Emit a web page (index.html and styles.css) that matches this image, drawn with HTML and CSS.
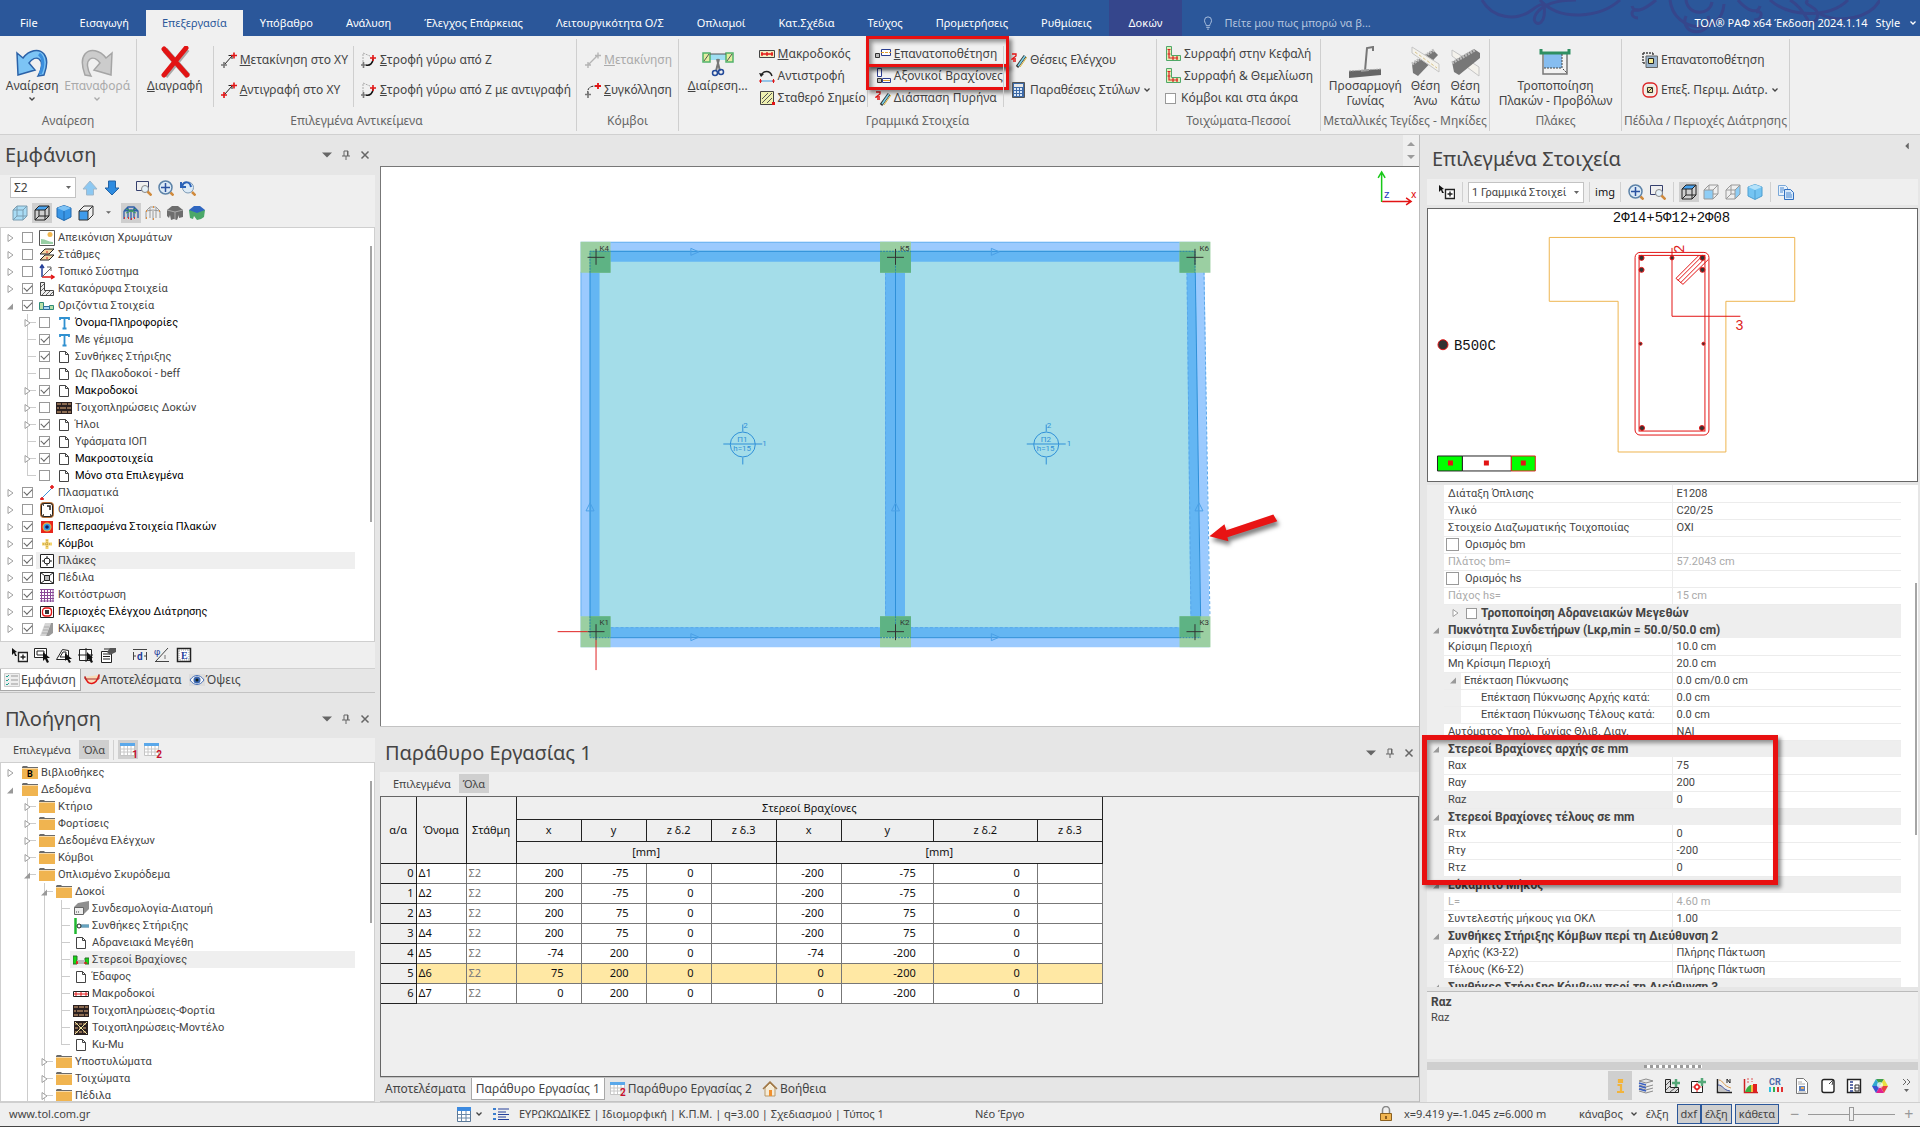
FILE: index.html
```
<!DOCTYPE html>
<html lang="el">
<head>
  <meta charset="UTF-8" />
  <meta name="viewport" content="width=device-width, initial-scale=1.0" />
  <title>ΤΟΛ ΡΑΦ</title>
  <link rel="stylesheet" href="styles.css">
</head>
<body>

  <!-- ICON SPRITE -->
  <svg class="sprite" aria-hidden="true">
    <symbol id="closed" viewBox="0 0 14 14"><path d="M5 3.5v7l5-3.5z" fill="#fff" stroke="#a0a0a0"/></symbol>
    <symbol id="open" viewBox="0 0 14 14"><path d="M10 4.5v6H4z" fill="#999"/></symbol>
    <symbol id="chev" viewBox="0 0 8 8"><path d="M1.5 2.5L4 5l2.500-2.500" fill="none" stroke="currentColor" stroke-width="1.300"/></symbol>
    <symbol id="tri" viewBox="0 0 8 8"><path d="M0 2h8L4 6z" fill="#666"/></symbol>
    <symbol id="pin" viewBox="0 0 10 10"><path d="M3 1h4v5M3 1v5M1 6h8M5 6v4M6.500 1v5" fill="none" stroke="#666"/></symbol>
    <symbol id="close" viewBox="0 0 10 10"><path d="M1.500 1.500l7 7m0-7l-7 7" fill="none" stroke="#666" stroke-width="1.500"/></symbol>
    <symbol id="doc" viewBox="0 0 16 16"><path d="M3.500 2.500h6l3 3v8h-9zM9.500 2.500v3h3" fill="#fff" stroke="#444"/></symbol>
    <symbol id="folder" viewBox="0 0 16 16"><path d="M0 2l1-1h4l1 1h10v1H0z" fill="#6b6b6b"/><path d="M0 3.500h16V14H0z" fill="#f0b450"/></symbol>
    <symbol id="folder-b" viewBox="0 0 16 16"><path d="M0 2l1-1h4l1 1h10v1H0z" fill="#6b6b6b"/><path d="M0 3.500h16V14H0z" fill="#f0b450"/><text x="5" y="12" font-size="9" font-weight="bold" font-family="Roboto">B</text></symbol>
    <symbol id="undo" viewBox="0 0 32 32"><path d="M1 7l6 5C13 4 23 2 28 8c4 5 3 13 0 21l-6 1c4-7 5-14 1-17-3-2-7 0-10 4l6 7-17 5z" fill="#7cc4f5" stroke="#2b62a8" stroke-width="1.500"/><path d="M23 8c5 4 5 12 1 20" fill="none" stroke="#3a8ede" stroke-width="3"/></symbol>
    <symbol id="redo" viewBox="0 0 32 32"><path d="M31 7l-6 5C19 4 9 2 4 8c-4 5-3 13 0 21l6 1C6 23 5 16 9 13c3-2 7 0 10 4l-6 7 17 5z" fill="#ccc" stroke="#a5a5a5" stroke-width="1.500"/></symbol>
    <symbol id="delete" viewBox="0 0 32 32"><path d="M5 3l23 26M27 2L5 29" stroke="#a9a9a9" stroke-width="6" transform="translate(1 1)"/><path d="M5 3l23 26M27 2L5 29" stroke="#e21414" stroke-width="5" stroke-linecap="round"/></symbol>
    <symbol id="move" viewBox="0 0 16 16"><path d="M3.500 12.500L11 4" stroke="#222"/><path d="M11 7V3.500H7.500" fill="none" stroke="#222"/><path d="M10 3.500h6M13 .5v6" stroke="#e21414" stroke-width="1.600"/><path d="M0 13h6M3 10v6" stroke="#777" stroke-width="1.600"/></symbol>
    <symbol id="copy-xy" viewBox="0 0 16 16"><path d="M3.500 12.500L11 4" stroke="#222"/><path d="M11 7V3.500H7.500" fill="none" stroke="#222"/><path d="M10 3.500h6M13 .5v6M0 13h6M3 10v6" stroke="#e21414" stroke-width="1.600"/></symbol>
    <symbol id="move-off" viewBox="0 0 16 16"><path d="M3 13L13 3M0 13h6M3 10v6M10 3.500h6M13 .5v6" stroke="#b5b5b5" stroke-width="1.400"/></symbol>
    <symbol id="rotate" viewBox="0 0 16 16"><path d="M2 13V1l7 3" fill="none" stroke="#aaa" stroke-dasharray="2 1"/><path d="M5 13c4 1 7-2 7-6" fill="none" stroke="#111" stroke-width="1.500"/><path d="M9 6h6M12 3v6" stroke="#e21414" stroke-width="1.600"/><path d="M0 13h5M2.500 10v6" stroke="#777" stroke-width="1.600"/></symbol>
    <symbol id="glue" viewBox="0 0 16 16"><path d="M3 12C2 6 5 4 11 4" fill="none" stroke="#222" stroke-dasharray="3 1"/><path d="M10 4h6M13 1v6" stroke="#e21414" stroke-width="1.800"/><path d="M0 12.500h6M3 10v6" stroke="#777" stroke-width="1.600"/></symbol>
    <symbol id="split" viewBox="0 0 32 32"><path d="M8 8h16v6H8z" fill="#9fdff2"/><path d="M1 7h7v9H1zM24 7h7v9h-7z" fill="#e2eea0" stroke="#52b26a" stroke-width="1.500"/><path d="M8 8h16M2 15l5-7M25 15l5-7" stroke="#555"/><path d="M15 13l3 12M17 13l-3 12" stroke="#777" stroke-width="2"/><circle cx="13" cy="27" r="2.500" fill="none" stroke="#234a9a" stroke-width="1.500"/><circle cx="19" cy="26" r="2.500" fill="none" stroke="#234a9a" stroke-width="1.500"/></symbol>
    <symbol id="macro" viewBox="0 0 16 16"><path d="M.5 4.500h15v7H.5z" fill="#f0edc0" stroke="#444"/><path d="M2 8h12M3 6v4M8 6v4M13 6v4" stroke="#e21414" stroke-width="1.300"/></symbol>
    <symbol id="reverse" viewBox="0 0 16 16"><path d="M2 8c2-6 9-6 11 0" fill="none" stroke="#222" stroke-width="1.500"/><path d="M0 5l2 4 3-3z" fill="#222"/><path d="M2 13h12" stroke="#3b9ae0"/><path d="M0 13h3M13 13h3M1.500 11v4M14.500 11v4" stroke="#e21414"/></symbol>
    <symbol id="fixed" viewBox="0 0 16 16"><path d="M1.500 1.500h13v13h-13z" fill="#eef0b0" stroke="#444"/><path d="M3 9l6-6M3 13L13 3M8 13l5-5" stroke="#555"/><path d="M13 12h3v3h-3z" fill="#e21414"/></symbol>
    <symbol id="repos" viewBox="0 0 16 16"><path d="M.5 7.500h4v4h-4z" fill="#bbb" stroke="#333"/><path d="M6.500 3.500h9v6h-9z" fill="#fff" stroke="#2a3d90"/><path d="M6 6.500h10" stroke="#e0a030" stroke-dasharray="3 1"/></symbol>
    <symbol id="axial" viewBox="0 0 16 16"><path d="M2.500.5h4v8h-4zM7.500 10.500h8v4h-8z" fill="#fff" stroke="#2a3d90"/><path d="M2.500 10.500h4v4h-4z" fill="#bbb" stroke="#333"/><path d="M8 12.500h7" stroke="#e0a030"/></symbol>
    <symbol id="core" viewBox="0 0 16 16"><path d="M6 15l8-11" stroke="#333" stroke-width="3"/><path d="M7 14l7-10" stroke="#7bd4ea" stroke-width="1.500"/><path d="M9 15l7-10" stroke="#d9b840"/><path d="M1 2h4v2L1 7h4M2 9l3 0" fill="none" stroke="#e21414" stroke-width="1.300"/></symbol>
    <symbol id="calc" viewBox="0 0 16 16"><path d="M1.500.5h12v15h-12z" fill="#3d6aa8" stroke="#555"/><path d="M3 2h9v3H3z" fill="#e8e8e8"/><path d="M4 6v9M7 6v9M10 6v9" stroke="#dbe8f7" stroke-width="2" stroke-dasharray="2 1"/></symbol>
    <symbol id="wall" viewBox="0 0 16 16"><path d="M1.500.5h5v9h9v5h-14z" fill="#dff0b8" stroke="#4fa868"/><path d="M4 3v9h9M2.500 3.500h3M2.500 8h3M8 10v4M12 10v4" fill="none" stroke="#d22" stroke-width="1.200"/></symbol>
    <symbol id="purlin" viewBox="0 0 32 32"><path d="M0 25l32-2v6L0 32z" fill="#666"/><path d="M16 25L18 2l6-1v4" fill="none" stroke="#777" stroke-width="2"/><path d="M12 25l8-1" stroke="#999" stroke-width="2"/><path d="M0 25l32-2" stroke="#aaa" stroke-dasharray="2 1"/></symbol>
    <symbol id="up" viewBox="0 0 32 32"><path d="M3 18L24 4l5 5-20 21-5-3z" fill="#777"/><path d="M3 18L25 4" stroke="#bbb" stroke-width="3" stroke-dasharray="2 1"/><path d="M3 1l27 17v8L3 7z" fill="#f4f2ec" stroke="#c5c5c5"/><path d="M6 6l22 16" stroke="#d8c48a" stroke-dasharray="3 2"/></symbol>
    <symbol id="down" viewBox="0 0 32 32"><path d="M3 4l27 17v9L3 10z" fill="#f4f2ec" stroke="#c5c5c5"/><path d="M3 16L25 3l6 4v5L10 29l-5-3z" fill="#777"/><path d="M3 17L26 4" stroke="#bbb" stroke-width="3" stroke-dasharray="2 1"/></symbol>
    <symbol id="slab-edit" viewBox="0 0 32 32"><path d="M4 7h24v21H4z" fill="#f2f2f2" stroke="#777" stroke-width="1.500"/><path d="M5 8h18v14H5z" fill="#86bdf0"/><path d="M2 3v4h28V3" fill="none" stroke="#2f8f62" stroke-width="3"/><path d="M23 8v14H5M24 23l4 4" fill="none" stroke="#444" stroke-dasharray="2 1"/></symbol>
    <symbol id="foot" viewBox="0 0 16 16"><path d="M1 1h10M1 1v10M11 1v3M1 11h3" stroke="#444" stroke-width="1.500" stroke-dasharray="2 1"/><path d="M4 4h11.500v11.500H4z" fill="#9bb6cf" stroke="#666"/><path d="M6.500 6.500h5v5h-5z" fill="#f4ea90" stroke="#222"/></symbol>
    <symbol id="punch" viewBox="0 0 16 16"><rect x="1" y="1" width="14" height="14" rx="5" fill="#f0f0f0" stroke="#d22" stroke-width="1.300"/><rect x="3.500" y="3.500" width="9" height="9" rx="3" fill="#f5e9d0"/><path d="M5.500 5.500h5v5h-5z" fill="#e8e29a" stroke="#333"/><path d="M6 10l4-4" stroke="#333"/></symbol>
    <symbol id="bulb" viewBox="0 0 12 16"><path d="M4 11c0-2-2-3-2-6a4 4 0 018 0c0 3-2 4-2 6zM4 13h4M5 15h2" fill="none" stroke="#b9cbe6"/></symbol>
    <symbol id="arrow-up" viewBox="0 0 16 16"><path d="M8 1l7 8h-3.500v6h-7V9H1z" fill="#8cc8f2" stroke="#9fb8cc"/></symbol>
    <symbol id="arrow-down" viewBox="0 0 16 16"><path d="M8 15l7-7h-3.500V1h-7v7H1z" fill="#2d8be0" stroke="#2463a5"/></symbol>
    <symbol id="zoom-win" viewBox="0 0 16 16"><path d="M.5 1.500h12v9H.5z" fill="none" stroke="#35406e"/><circle cx="9" cy="9" r="3.500" fill="#e4f0f8" stroke="#888"/><path d="M11.500 11.500l4 4" stroke="#d08a3c" stroke-width="2.500"/></symbol>
    <symbol id="zoom-all" viewBox="0 0 16 16"><circle cx="7.500" cy="7.500" r="6.500" fill="#dceaf6" stroke="#5d83a8" stroke-width="1.500"/><path d="M7.500 3v9M3 7.500h9" stroke="#2a52a0" stroke-width="1.500"/><path d="M12.500 12.500l3 3" stroke="#d08a3c" stroke-width="2.500"/></symbol>
    <symbol id="zoom-prev" viewBox="0 0 16 16"><circle cx="8" cy="7.500" r="5.500" fill="#dceaf6" stroke="#7d9ab5"/><path d="M1 2v5h5M2 6c2-5 8-5 9 1" fill="none" stroke="#2a62b8" stroke-width="2"/><path d="M12 12l3.500 3.500" stroke="#d08a3c" stroke-width="2.500"/></symbol>
    <symbol id="cube-glass" viewBox="0 0 16 16"><path d="M1 5l4-4h10v10l-4 4H1z" fill="#a9dcf5" stroke="#7a9cb0"/><path d="M1 5h10v10M11 5l4-4M5 1v10h10M5 11l-4 4" fill="none" stroke="#7a9cb0"/></symbol>
    <symbol id="cube-top" viewBox="0 0 16 16"><path d="M1 5l4-4h10l-4 4z" fill="#4aa3ee"/><path d="M1 5l4-4h10v10l-4 4H1zM1 5h10v10M11 5l4-4M5 5v6h10M5 11l-4 4" fill="none" stroke="#222"/></symbol>
    <symbol id="cube-solid" viewBox="0 0 16 16"><path d="M8 .5L15 3v9l-7 3.500L1 12V3z" fill="#3996e6" stroke="#2268ad"/><path d="M8 .5L15 3 8 6 1 3z" fill="#7fc3f5"/><path d="M8 6v9" stroke="#2268ad"/></symbol>
    <symbol id="cube-light" viewBox="0 0 16 16"><path d="M8 .5L15 3v9l-7 3.500L1 12V3z" fill="#74c4f2" stroke="#4f9fd0"/><path d="M8 .5L15 3 8 6 1 3z" fill="#b4e2fa"/><path d="M8 6v9" stroke="#4f9fd0"/></symbol>
    <symbol id="cube-front" viewBox="0 0 16 16"><path d="M1 6h9v9H1z" fill="#3f9beb"/><path d="M1 6l5-5h9v9l-5 5H1zM1 6h9v9M10 6l5-5" fill="none" stroke="#333"/></symbol>
    <symbol id="cube-front-l" viewBox="0 0 16 16"><path d="M1 6h9v9H1z" fill="#8ecdf5"/><path d="M1 6l5-5h9v9l-5 5H1zM1 6h9v9M10 6l5-5M6 1v5M10 10h5" fill="none" stroke="#999"/></symbol>
    <symbol id="cube-right" viewBox="0 0 16 16"><path d="M10 6l5-5v9l-5 5z" fill="#8ecdf5"/><path d="M1 6l5-5h9v9l-5 5H1zM1 6h9v9M10 6l5-5M6 1v9h4M6 10l-5 5" fill="none" stroke="#999"/></symbol>
    <symbol id="frame" viewBox="0 0 16 16"><path d="M1 6l4-4h6l4 4v7M1 6v8M5 3v10M11 3v10M8 6v9M1 6l7-1 7 1" fill="none" stroke="#2e5fa8" stroke-width="1.300"/><path d="M3 4l10 4M13 4L3 8" stroke="#3a9a5a"/><path d="M1 13h1M5 13h1M8 14h1M11 13h1" stroke="#d33" stroke-width="2"/></symbol>
    <symbol id="frame-w" viewBox="0 0 16 16"><path d="M1 6l4-4h6l4 4v7M1 6v8M5 3v10M11 3v10M8 6v9M1 6l7-1 7 1" fill="none" stroke="#999"/><path d="M1 6h1M8 2h1M14 6h1M1 13h1M8 14h1" stroke="#e09040" stroke-width="2"/></symbol>
    <symbol id="frame-g" viewBox="0 0 16 16"><path d="M0 5l5-4h6l5 4v7l-4 1v-3l-2 5-3-1-3 1-1-5-1 3-2-2z" fill="#6d6d6d"/><path d="M0 5l8 2 8-2M8 7v7" stroke="#aaa" fill="none"/></symbol>
    <symbol id="frame-c" viewBox="0 0 16 16"><path d="M0 5l1 8 3 1 1-3 3 4 4-1 3-2 1-7z" fill="#4ba869"/><path d="M0 5l5-4h6l5 4-8 3z" fill="#2f66c0"/></symbol>
    <symbol id="i-pic" viewBox="0 0 16 16"><path d="M.5.5h15v15H.5z" fill="#fff" stroke="#555"/><circle cx="11" cy="4.500" r="2.500" fill="#f2b74e"/><path d="M2 14V9c5 0 7 3 12 3v2z" fill="#98cfa5"/></symbol>
    <symbol id="i-levels" viewBox="0 0 16 16"><path d="M1 7l5-5h9l-5 5zM1 13l5-5h9l-5 5z" fill="#f5d9a5" stroke="#222"/><path d="M7 5h2M7 11h2" stroke="#d22"/></symbol>
    <symbol id="i-axes" viewBox="0 0 16 16"><path d="M3 13V2M1 4l2-3 2 3" fill="none" stroke="#26409a" stroke-width="1.500"/><path d="M3 13h11M12 11l3 2-3 2" fill="none" stroke="#e21414" stroke-width="1.500"/><path d="M3 13l9-9M8 3h4v4" fill="none" stroke="#666"/></symbol>
    <symbol id="i-vert" viewBox="0 0 16 16"><path d="M1.500 1.500h4v8h9v5h-13z" fill="#eee" stroke="#444"/><path d="M2 6l3-3M2 10l3-3M3 14l4-4M7 14l4-4M11 14l3-3" stroke="#666"/></symbol>
    <symbol id="i-hor" viewBox="0 0 16 16"><path d="M.5 4.500h4v7h-4zM10.500 7.500h4v4h-4z" fill="#b9e0a8" stroke="#2f8a78"/><path d="M4.500 8.500h6v3h-6z" fill="#a8d8f5" stroke="#2f6f9a"/></symbol>
    <symbol id="i-t" viewBox="0 0 16 16"><path d="M4 5V3h9v2M8.500 3v10.500M6.500 13.500h4" fill="none" stroke="#2f90d0" stroke-width="1.800"/></symbol>
    <symbol id="i-brick" viewBox="0 0 16 16"><path d="M0 2h16v12H0z" fill="#2a2020"/><path d="M1 4h4M6 4h5M12 4h3M1 8h2M4 8h6M11 8h4M1 12h4M6 12h5M12 12h3" stroke="#8a6a50" stroke-width="2"/></symbol>
    <symbol id="i-model" viewBox="0 0 16 16"><path d="M1 1h14v14H1z" fill="#2a2020"/><path d="M2 4h12M2 8h12M2 12h12" stroke="#8a6a50" stroke-width="2" stroke-dasharray="3 1"/><path d="M2 2l12 12M14 2L2 14" stroke="#f0e6a0"/></symbol>
    <symbol id="i-line" viewBox="0 0 16 16"><path d="M3 13L13 3" stroke="#3b8fd8"/><path d="M1 14h4M3 12v3M11 2h4M13 0v4" stroke="#e21414" stroke-width="1.500"/></symbol>
    <symbol id="i-rebar" viewBox="0 0 16 16"><rect x="2" y="1" width="12" height="14" rx="3" fill="#fff" stroke="#b8743c" stroke-width="2"/><rect x="2.500" y="1.500" width="11" height="13" rx="2" fill="none" stroke="#222"/><path d="M8 4h3v4M4 3h1M4 13h1M11 13h1" fill="none" stroke="#222" stroke-width="1.500"/></symbol>
    <symbol id="i-fem" viewBox="0 0 16 16"><path d="M2 2h12v12H2z" fill="#e8261c"/><circle cx="8" cy="8" r="4.500" fill="#f0b840"/><circle cx="8" cy="8" r="3.500" fill="#3a9ae0"/><circle cx="8" cy="8" r="1.800" fill="#111c60"/></symbol>
    <symbol id="i-node" viewBox="0 0 16 16"><path d="M8 3v10M3 8h10" stroke="#f3d470" stroke-width="3"/><path d="M8 4v8M4 8h8" stroke="#b8923c" stroke-dasharray="1 1"/></symbol>
    <symbol id="i-slab" viewBox="0 0 16 16"><path d="M1.500 1.500h13v13h-13z" fill="#fff" stroke="#222"/><circle cx="8" cy="8" r="3" fill="none" stroke="#222"/><path d="M8 3v3M8 10v3M3 8h3M10 8h3" stroke="#222"/></symbol>
    <symbol id="i-foot" viewBox="0 0 16 16"><path d="M1.500 2.500h13v11h-13zM5.500 5.500h5v5h-5zM1.500 2.500l4 3M14.500 2.500l-4 3M1.500 13.500l4-3M14.500 13.500l-4-3" fill="#fff" stroke="#222"/><path d="M6 6h4v4H6z" fill="#bbb"/></symbol>
    <symbol id="i-mesh" viewBox="0 0 16 16"><path d="M2.500 2v13M5.500 2v13M8.500 2v13M11.500 2v13M14 2v13M1 2.500h14M1 5.500h14M1 8.500h14M1 11.500h14M1 14h14" stroke="#8a4a98"/></symbol>
    <symbol id="i-punch" viewBox="0 0 16 16"><path d="M1.500 2.500h13v11h-13z" fill="#fff" stroke="#222"/><rect x="3.500" y="4" width="9" height="8" rx="3" fill="none" stroke="#e21414" stroke-width="1.300"/><path d="M6 6h4v4H6z" fill="#333"/></symbol>
    <symbol id="i-stair" viewBox="0 0 16 16"><path d="M1 15L6 2h6l-5 13z" fill="#d5d5d5"/><path d="M7 15l5-13h2v10l-4 3z" fill="#999"/><path d="M3 12h5M4 9h5M5 6h5" stroke="#aaa"/></symbol>
    <symbol id="i-section" viewBox="0 0 16 16"><path d="M1 6l4-4 11-2v8l-5 5H1z" fill="#8f8f8f"/><path d="M1.500 6.500h9v7h-9z" fill="#eee" stroke="#666"/><path d="M3 11h1M5 11h1" stroke="#444"/></symbol>
    <symbol id="i-supp" viewBox="0 0 16 16"><path d="M2.500 0v16" stroke="#20b830" stroke-width="2.500"/><path d="M4 8h12" stroke="#2a6f90" stroke-width="3"/><path d="M8 8h8" stroke="#9fd8f0"/><circle cx="6" cy="8" r="2" fill="#fff" stroke="#222"/></symbol>
    <symbol id="i-arms" viewBox="0 0 16 16"><path d="M0 4h4v8H0zM12 6h4v6h-4z" fill="#15d815" stroke="#2c6a2c"/><path d="M4 8h8v4H4z" fill="#bbb"/><path d="M3 11h2M11 11h3M4 9v3" stroke="#d22" stroke-width="1.500"/></symbol>
    <symbol id="i-macro" viewBox="0 0 16 16"><path d="M.5 5.500h15v5H.5z" fill="#fff" stroke="#222"/><path d="M1 8h14M3 6v4M8 6v4M13 6v4" stroke="#e21414"/></symbol>
    <symbol id="pick" viewBox="0 0 16 16"><path d="M0 1l5 4-2 .5L5 9 3 9 2 6 0 8z" fill="#111"/><path d="M6.500 5.500h9v9h-9zM11 7.500v5M8.500 10h5" fill="#fff" stroke="#222" stroke-width="1.400"/></symbol>
    <symbol id="pick-win" viewBox="0 0 16 16"><path d="M.5 1.500h12v9H.5zM3 4h7v4H3z" fill="#fff" stroke="#222"/><path d="M9 5l7 6h-3l2 4-2 1-2-4-2 2z" fill="#111"/></symbol>
    <symbol id="pick-poly" viewBox="0 0 16 16"><path d="M.5 12.500h12v-9l-6-1zM4 10h6V5H7z" fill="#fff" stroke="#222"/><path d="M9 6l7 6h-3l2 3-2 1-2-4-2 2z" fill="#111"/></symbol>
    <symbol id="pick-grid" viewBox="0 0 16 16"><path d="M1.500 2.500h12v11h-12zM8 1v14M0 8h15" fill="#fff" stroke="#222"/><path d="M9 5l6 6h-2l2 4-2 1-2-4-2 2z" fill="#111"/></symbol>
    <symbol id="pick-list" viewBox="0 0 16 16"><path d="M1.500 4.500h10v11h-10zM3 7h7M3 9.500h7M3 12h7M4 2h6v2" fill="#fff" stroke="#222"/><path d="M10 1h6v4l-6 3-3-3z" fill="#555"/></symbol>
    <symbol id="dim" viewBox="0 0 16 16"><path d="M1 2.500h14M1.500 5v8M14.500 5v8M2 9h2M12 9h2" stroke="#444"/><text x="5" y="13" font-size="10" font-weight="bold" fill="#26409a" font-family="Roboto">d</text></symbol>
    <symbol id="angle" viewBox="0 0 16 16"><path d="M1 14.500h14M2 14L14 1" stroke="#444"/><text x="0" y="8" font-size="9" fill="#26409a" font-family="Roboto">φ</text><path d="M11 12V8" stroke="#777"/></symbol>
    <symbol id="ebox" viewBox="0 0 16 16"><path d="M1.500 1.500h13v13h-13z" fill="#fff" stroke="#222" stroke-width="1.500"/><path d="M3 3h10v10H3z" fill="none" stroke="#999" stroke-dasharray="1 1"/><text x="5" y="12" font-size="10" font-weight="bold" fill="#26409a" font-family="Liberation Serif">E</text></symbol>
    <symbol id="t-list" viewBox="0 0 16 16"><path d="M.5 1.500h15v13H.5z" fill="#eee" stroke="#ccc"/><path d="M7 4h7M7 8h7M7 12h7" stroke="#999"/><path d="M2 4l1 1 2-2M2 8l1 1 2-2M2 12l1 1 2-2" fill="none" stroke="#20a090"/></symbol>
    <symbol id="t-curve" viewBox="0 0 16 16"><path d="M1 5c3 9 11 9 14-2" fill="#f8dcb8" stroke="#e21414" stroke-width="1.500"/><path d="M1 4v3h14V2" fill="none" stroke="#a33"/></symbol>
    <symbol id="t-eye" viewBox="0 0 16 16"><path d="M0 2h16v12H0z" fill="#ddd"/><path d="M1 8c4-6 10-6 14 0-4 6-10 6-14 0z" fill="#f8f8f8" stroke="#4a72b8"/><circle cx="8" cy="8" r="3.500" fill="#3a66b0"/><circle cx="8" cy="8" r="1.500" fill="#122"/></symbol>
    <symbol id="sheet" viewBox="0 0 16 16"><path d="M.5 1.500h14v12H.5z" fill="#fff" stroke="#c5c5c5"/><path d="M0 1h15v3H0z" fill="#5aa8ea"/><path d="M4 4v9M7.500 4v9M11 4v9M1 7h13M1 10h13" stroke="#c8c8c8"/></symbol>
    <symbol id="house" viewBox="0 0 16 16"><path d="M3 7v8h10V7L8 2z" fill="#f5ecd8" stroke="#b89868"/><path d="M1 8l7-7 7 7" fill="none" stroke="#a07848" stroke-width="1.500"/><path d="M7 9h3v6H7z" fill="#f09030"/></symbol>
    <symbol id="copy" viewBox="0 0 16 16"><path d="M.5 1.500h7l2 2v8h-9z" fill="#e8f2fc" stroke="#7aa8d8"/><path d="M6.500 5.500h6l3 3v7h-9z" fill="#d6e8fa" stroke="#2f6fc0"/><path d="M8 9h5M8 11h6M8 13h6M2 4h4M2 6h4M2 8h3" stroke="#4a88d0"/></symbol>
    <symbol id="s-sheet" viewBox="0 0 16 16"><path d="M1.500 1.500h13v14h-13z" fill="#fff" stroke="#5a7898"/><path d="M1 1h14v4H1z" fill="#3c8ae0"/><path d="M5.500 5v10M10 5v10M2 8.500h12M2 12h12" stroke="#6a88a8"/></symbol>
    <symbol id="s-list" viewBox="0 0 16 16"><path d="M0 3h3M0 8h3M0 13h3" stroke="#3c7fd0" stroke-width="2"/><path d="M5 3h11M5 6h8M5 8.500h11M5 11h8M5 13.500h11" stroke="#26409a"/></symbol>
    <symbol id="lock" viewBox="0 0 16 16"><path d="M4.500 7V4a3 3 0 017 0v3" fill="none" stroke="#888" stroke-width="1.500"/><path d="M2.500 7.500h11v7h-11z" fill="#f0b450" stroke="#8a6020"/><path d="M8 10v3" stroke="#6a4010" stroke-width="1.500"/></symbol>
    <symbol id="b-info" viewBox="0 0 16 16"><path d="M5.500 7H9v7M5 14h7M7 2h3v2H7z" fill="none" stroke="#f2b43c" stroke-width="2.200"/></symbol>
    <symbol id="b-db" viewBox="0 0 16 16"><path d="M1 3l7-2 7 2-7 2zM1 7l7 2 7-2M1 10l7 2 7-2M1 13l7 2 7-2" fill="#e6e6e6" stroke="#8c8c8c"/><path d="M1 5l7 2M1 8l7 2M1 11l7 2" stroke="#3a5fc0" stroke-width="1.500"/></symbol>
    <symbol id="b-vadd" viewBox="0 0 16 16"><path d="M1.500 1.500h5v8h8v5h-13z" fill="#ddd" stroke="#222"/><path d="M2 7l4-4M2 12l5-5M6 14l5-4M11 14l3-3" stroke="#555"/><path d="M12 1v8M8 5h8" stroke="#55a878" stroke-width="2.500"/></symbol>
    <symbol id="b-nadd" viewBox="0 0 16 16"><path d="M1.500 3.500h11v11h-11z" fill="#fff" stroke="#222"/><circle cx="7" cy="9" r="2.200" fill="none" stroke="#e21414" stroke-width="1.500"/><path d="M7 4.500v2M7 11v3M2.500 9h2M9.500 9h2" stroke="#e21414"/><path d="M12 0v8M8 4h8" stroke="#55a878" stroke-width="2.500"/></symbol>
    <symbol id="b-curve" viewBox="0 0 16 16"><path d="M1.500 1v13.500H16" fill="none" stroke="#222" stroke-width="1.500"/><path d="M2 7c5 0 5 5 12 6H2z" fill="#c5c5c5"/><path d="M2 7c5 0 5 5 12 6" fill="none" stroke="#3a4fa0"/><path d="M3 2c4 0 4 6 12 8" fill="none" stroke="#d89a50"/><path d="M11 5V1l3 4V1" fill="none" stroke="#222"/></symbol>
    <symbol id="b-chart" viewBox="0 0 16 16"><path d="M2.500 1v13.500H16" fill="none" stroke="#c22" stroke-width="1.500"/><path d="M3 14c2-5 4-7 6-7v7z" fill="#3ab040"/><path d="M11 6h4v8h-4z" fill="#e22020"/><path d="M9 7h2v7H9z" fill="#f0c040"/><path d="M6 0v6M10 0v4" stroke="#d55" stroke-dasharray="2 1"/></symbol>
    <symbol id="b-cr" viewBox="0 0 16 16"><text x="1" y="7" font-size="9" font-weight="bold" fill="#4a68a8" font-family="Roboto">CR</text><path d="M2 9v5" stroke="#2ac0e0" stroke-width="2"/><path d="M6 9v5" stroke="#30b050" stroke-width="2"/><path d="M10 9v5M14 9v5" stroke="#e23030" stroke-width="2"/></symbol>
    <symbol id="b-doc" viewBox="0 0 16 16"><path d="M2.500.5h7l4 4v11h-11z" fill="#fff" stroke="#777"/><path d="M4 4h4M4 6h7M4 14h8" stroke="#aaa"/><path d="M5 8h6v5H5z" fill="#5a80c0"/><path d="M7 9h3v2H7z" fill="#f0b060"/></symbol>
    <symbol id="b-stirrup" viewBox="0 0 16 16"><rect x="2" y="1.500" width="12" height="13" rx="2" fill="#fff" stroke="#222" stroke-width="1.400"/><path d="M9 6l4-4M12 7l1-4" stroke="#444"/></symbol>
    <symbol id="b-box" viewBox="0 0 16 16"><path d="M1.500 1.500h13v13h-13z" fill="#fff" stroke="#222" stroke-width="1.400"/><path d="M4 4h3M4 7h3M4 10h3M4 13h3" stroke="#2a4090" stroke-width="1.500"/><path d="M9 7h4v6H9zM9 10h4" fill="none" stroke="#333"/></symbol>
    <symbol id="b-globe" viewBox="0 0 16 16"><path d="M8 8L4 1h8z" fill="#40a050"/><path d="M8 8l4-7 4 7z" fill="#e8e040"/><path d="M8 8h8l-4 7z" fill="#e84040"/><path d="M8 8l4 7H4z" fill="#e22090"/><path d="M8 8l-4 7-4-7z" fill="#3850d0"/><path d="M8 8H0l4-7z" fill="#30a8d0"/><circle cx="8" cy="7" r="3" fill="#fff" opacity=".7"/></symbol>
    <symbol id="b-more" viewBox="0 0 16 16"><path d="M5 1l3 3-3 3M9 1l3 3-3 3" fill="none" stroke="#666"/><path d="M6 11h5l-2.500 3z" fill="#666"/></symbol>
  </svg>

  <!-- MENU TABS -->
  <header class="menu">
    <svg class="swirls" viewBox="0 0 400 36" fill="none" stroke="#36468c" stroke-width="3" aria-hidden="true">
      <path d="M2 0c10 18 34 22 50 10 10-8 14-8 12 6-2 12-14 8-8-2 8-12 26-14 40-14M60 0c20 22 60 18 80 0M176 0c-12 10-22 14-24 6M158 10c-8-2-8 8 0 8M190 0c4 34 52 36 54 4M206 0c2 16 24 16 26 2M206 16c-8 20 28 22 22 0M258 0c10 12 20 14 22 6M276 12c8-2 6 8-2 8M290 0c20 18 60 18 78 0M310 0c20 12 16 30 26 20 8-14-16-14-8-20M340 14c20 10 50 4 60-14"/>
    </svg>
    <nav class="menu-tabs">
      <a href="#">File</a>
      <a href="#" class="gap-left">Εισαγωγή</a>
      <a href="#" class="active">Επεξεργασία</a>
      <a href="#">Υπόβαθρο</a>
      <a href="#">Ανάλυση</a>
      <a href="#">Έλεγχος Επάρκειας</a>
      <a href="#">Λειτουργικότητα Ο/Σ</a>
      <a href="#">Οπλισμοί</a>
      <a href="#">Κατ.Σχέδια</a>
      <a href="#">Τεύχος</a>
      <a href="#">Προμετρήσεις</a>
      <a href="#">Ρυθμίσεις</a>
      <a href="#" class="context">Δοκών</a>
    </nav>
    <label class="ask"><svg class="bulb"><use href="#bulb"/></svg><input type="text" placeholder="Πείτε μου πως μπορώ να β..."></label>
    <span class="version">ΤΟΛ® ΡΑΦ x64 Έκδοση 2024.1.14</span>
    <button class="style-btn">Style <svg class="chev"><use href="#chev"/></svg></button>
  </header>

  <!-- RIBBON -->
  <section class="ribbon">
    <div class="group">
      <div class="group-body spread">
        <button class="big"><svg><use href="#undo"/></svg>Αναίρεση<svg class="chev"><use href="#chev"/></svg></button>
        <button class="big off" disabled><svg><use href="#redo"/></svg>Επαναφορά<svg class="chev"><use href="#chev"/></svg></button>
      </div>
      <h3>Αναίρεση</h3>
    </div>
    <div class="group">
      <div class="group-body">
        <button class="big wide"><svg><use href="#delete"/></svg><span><u>Δ</u>ιαγραφή</span></button>
        <div class="cmds two split">
          <button><svg><use href="#move"/></svg><span><u>Μ</u>ετακίνηση στο XY</span></button>
          <button><svg><use href="#copy-xy"/></svg><span><u>Α</u>ντιγραφή στο XY</span></button>
        </div>
        <div class="cmds two split">
          <button><svg><use href="#rotate"/></svg><span><u>Σ</u>τροφή γύρω από Ζ</span></button>
          <button><svg><use href="#rotate"/></svg><span><u>Σ</u>τροφή γύρω από Ζ με αντιγραφή</span></button>
        </div>
      </div>
      <h3>Επιλεγμένα Αντικείμενα</h3>
    </div>
    <div class="group">
      <div class="group-body">
        <div class="cmds two">
          <button class="off" disabled><svg><use href="#move-off"/></svg><span><u>Μ</u>ετακίνηση</span></button>
          <button><svg><use href="#glue"/></svg><span><u>Σ</u>υγκόλληση</span></button>
        </div>
      </div>
      <h3>Κόμβοι</h3>
    </div>
    <div class="group">
      <div class="group-body lines">
        <button class="big wide"><svg><use href="#split"/></svg><span><u>Δ</u>ιαίρεση...</span></button>
        <div class="cmds tight">
          <button><svg><use href="#macro"/></svg><span><u>Μ</u>ακροδοκός</span></button>
          <button><svg><use href="#reverse"/></svg>Αντιστροφή</button>
          <button><svg><use href="#fixed"/></svg>Σταθερό Σημείο</button>
        </div>
        <div class="cmds split marked">
          <button><svg><use href="#repos"/></svg><span><u>Ε</u>πανατοποθέτηση</span></button>
          <button><svg><use href="#axial"/></svg>Αξονικοί Βραχίονες</button>
          <button><svg><use href="#core"/></svg>Διάσπαση Πυρήνα</button>
          <i class="mark mark-repos"></i>
          <i class="mark mark-axial"></i>
        </div>
        <div class="cmds two split">
          <button><svg><use href="#core"/></svg>Θέσεις Ελέγχου</button>
          <button><svg><use href="#calc"/></svg>Παραθέσεις Στύλων<svg class="chev"><use href="#chev"/></svg></button>
        </div>
      </div>
      <h3>Γραμμικά Στοιχεία</h3>
    </div>
    <div class="group">
      <div class="group-body">
        <div class="cmds">
          <button><svg><use href="#wall"/></svg>Συρραφή στην Κεφαλή</button>
          <button><svg><use href="#wall"/></svg>Συρραφή &amp; Θεμελίωση</button>
          <label><input type="checkbox">Κόμβοι και στα άκρα</label>
        </div>
      </div>
      <h3>Τοιχώματα-Πεσσοί</h3>
    </div>
    <div class="group">
      <div class="group-body spread">
        <button class="big"><svg><use href="#purlin"/></svg>Προσαρμογή<br>Γωνίας</button>
        <button class="big"><svg><use href="#up"/></svg>Θέση<br>Άνω</button>
        <button class="big"><svg><use href="#down"/></svg>Θέση<br>Κάτω</button>
      </div>
      <h3>Μεταλλικές Τεγίδες - Μηκίδες</h3>
    </div>
    <div class="group">
      <div class="group-body spread">
        <button class="big"><svg><use href="#slab-edit"/></svg>Τροποποίηση<br>Πλακών - Προβόλων</button>
      </div>
      <h3>Πλάκες</h3>
    </div>
    <div class="group">
      <div class="group-body">
        <div class="cmds two inset">
          <button><svg><use href="#foot"/></svg>Επανατοποθέτηση</button>
          <button><svg><use href="#punch"/></svg>Επεξ. Περιμ. Διάτρ.<svg class="chev"><use href="#chev"/></svg></button>
        </div>
      </div>
      <h3>Πέδιλα / Περιοχές Διάτρησης</h3>
    </div>
  </section>

  <main class="workspace">

    <!-- LEFT COLUMN -->
    <aside class="left">
      <section class="panel">
        <header class="panel-head">
          <h2>Εμφάνιση</h2>
          <button aria-label="Μενού"><svg><use href="#tri"/></svg></button>
          <button aria-label="Καρφίτσωμα"><svg><use href="#pin"/></svg></button>
          <button aria-label="Κλείσιμο"><svg><use href="#close"/></svg></button>
        </header>
        <div class="tools">
          <select class="level" aria-label="Στάθμη"><option>Σ2</option></select>
          <button aria-label="Πάνω"><svg><use href="#arrow-up"/></svg></button>
          <button aria-label="Κάτω"><svg><use href="#arrow-down"/></svg></button>
          <button class="gap-l" aria-label="Μεγέθυνση παραθύρου"><svg><use href="#zoom-win"/></svg></button>
          <button aria-label="Όλα"><svg><use href="#zoom-all"/></svg></button>
          <button aria-label="Προηγούμενη"><svg><use href="#zoom-prev"/></svg></button>
        </div>
        <div class="tools">
          <button aria-label="Διαφανές"><svg><use href="#cube-glass"/></svg></button>
          <button class="on" aria-label="Κάτοψη"><svg><use href="#cube-top"/></svg></button>
          <button aria-label="Τρισδιάστατο"><svg><use href="#cube-solid"/></svg></button>
          <button aria-label="Όψη"><svg><use href="#cube-front"/></svg></button>
          <button class="drop" aria-label="Όψεις"><svg><use href="#tri"/></svg></button>
          <button class="on" aria-label="Προσομοίωμα"><svg><use href="#frame"/></svg></button>
          <button aria-label="Πλαίσιο"><svg><use href="#frame-w"/></svg></button>
          <button aria-label="Φορέας"><svg><use href="#frame-g"/></svg></button>
          <button aria-label="Χρώματα"><svg><use href="#frame-c"/></svg></button>
        </div>
        <div class="tree-box tall">
          <ul class="tree">
            <li><svg class="ex"><use href="#closed"/></svg><label><input type="checkbox"><svg><use href="#i-pic"/></svg>Απεικόνιση Χρωμάτων</label></li>
            <li><svg class="ex"><use href="#closed"/></svg><label><input type="checkbox"><svg><use href="#i-levels"/></svg>Στάθμες</label></li>
            <li><svg class="ex"><use href="#closed"/></svg><label><input type="checkbox"><svg><use href="#i-axes"/></svg>Τοπικό Σύστημα</label></li>
            <li><svg class="ex"><use href="#closed"/></svg><label><input type="checkbox" checked><svg><use href="#i-vert"/></svg>Κατακόρυφα Στοιχεία</label></li>
            <li><svg class="ex"><use href="#open"/></svg><label><input type="checkbox" checked><svg><use href="#i-hor"/></svg>Οριζόντια Στοιχεία</label></li>
            <li class="l1 dark"><svg class="ex"><use href="#closed"/></svg><label><input type="checkbox"><svg><use href="#i-t"/></svg>Όνομα-Πληροφορίες</label></li>
            <li class="l1"><span class="ex"></span><label><input type="checkbox" checked><svg><use href="#i-t"/></svg>Με γέμισμα</label></li>
            <li class="l1"><span class="ex"></span><label><input type="checkbox" checked><svg><use href="#doc"/></svg>Συνθήκες Στήριξης</label></li>
            <li class="l1"><span class="ex"></span><label><input type="checkbox"><svg><use href="#doc"/></svg>Ως Πλακοδοκοί - beff</label></li>
            <li class="l1 dark"><svg class="ex"><use href="#closed"/></svg><label><input type="checkbox" checked><svg><use href="#doc"/></svg>Μακροδοκοί</label></li>
            <li class="l1"><svg class="ex"><use href="#closed"/></svg><label><input type="checkbox"><svg><use href="#i-brick"/></svg>Τοιχοπληρώσεις Δοκών</label></li>
            <li class="l1"><svg class="ex"><use href="#closed"/></svg><label><input type="checkbox" checked><svg><use href="#doc"/></svg>Ήλοι</label></li>
            <li class="l1"><span class="ex"></span><label><input type="checkbox" checked><svg><use href="#doc"/></svg>Υφάσματα ΙΟΠ</label></li>
            <li class="l1 dark"><svg class="ex"><use href="#closed"/></svg><label><input type="checkbox" checked><svg><use href="#doc"/></svg>Μακροστοιχεία</label></li>
            <li class="l1 last dark"><span class="ex"></span><label><input type="checkbox"><svg><use href="#doc"/></svg>Μόνο στα Επιλεγμένα</label></li>
            <li><svg class="ex"><use href="#closed"/></svg><label><input type="checkbox" checked><svg><use href="#i-line"/></svg>Πλασματικά</label></li>
            <li><svg class="ex"><use href="#closed"/></svg><label><input type="checkbox"><svg><use href="#i-rebar"/></svg>Οπλισμοί</label></li>
            <li class="dark"><svg class="ex"><use href="#closed"/></svg><label><input type="checkbox" checked><svg><use href="#i-fem"/></svg>Πεπερασμένα Στοιχεία Πλακών</label></li>
            <li class="dark"><svg class="ex"><use href="#closed"/></svg><label><input type="checkbox" checked><svg><use href="#i-node"/></svg>Κόμβοι</label></li>
            <li class="hot"><svg class="ex"><use href="#closed"/></svg><label><input type="checkbox" checked><svg><use href="#i-slab"/></svg>Πλάκες</label></li>
            <li><svg class="ex"><use href="#closed"/></svg><label><input type="checkbox" checked><svg><use href="#i-foot"/></svg>Πέδιλα</label></li>
            <li><svg class="ex"><use href="#closed"/></svg><label><input type="checkbox" checked><svg><use href="#i-mesh"/></svg>Κοιτόστρωση</label></li>
            <li class="dark"><svg class="ex"><use href="#closed"/></svg><label><input type="checkbox" checked><svg><use href="#i-punch"/></svg>Περιοχές Ελέγχου Διάτρησης</label></li>
            <li><svg class="ex"><use href="#closed"/></svg><label><input type="checkbox" checked><svg><use href="#i-stair"/></svg>Κλίμακες</label></li>
          </ul>
          <i class="thumb"></i>
        </div>
        <div class="tools picks">
          <button aria-label="Επιλογή"><svg><use href="#pick"/></svg></button>
          <button aria-label="Επιλογή με παράθυρο"><svg><use href="#pick-win"/></svg></button>
          <button aria-label="Επιλογή με πολύγωνο"><svg><use href="#pick-poly"/></svg></button>
          <button aria-label="Επιλογή κανάβου"><svg><use href="#pick-grid"/></svg></button>
          <button aria-label="Επιλογή λίστας"><svg><use href="#pick-list"/></svg></button>
          <button class="gap-l" aria-label="Διάσταση"><svg><use href="#dim"/></svg></button>
          <button aria-label="Γωνία"><svg><use href="#angle"/></svg></button>
          <button aria-label="Εμβαδό"><svg><use href="#ebox"/></svg></button>
        </div>
        <nav class="dock-tabs">
          <a href="#" class="active"><svg><use href="#t-list"/></svg>Εμφάνιση</a>
          <a href="#"><svg><use href="#t-curve"/></svg>Αποτελέσματα</a>
          <a href="#"><svg><use href="#t-eye"/></svg>Όψεις</a>
        </nav>
      </section>

      <section class="panel">
        <header class="panel-head low">
          <h2>Πλοήγηση</h2>
          <button aria-label="Μενού"><svg><use href="#tri"/></svg></button>
          <button aria-label="Καρφίτσωμα"><svg><use href="#pin"/></svg></button>
          <button aria-label="Κλείσιμο"><svg><use href="#close"/></svg></button>
        </header>
        <div class="filter">
          <button>Επιλεγμένα</button>
          <button class="on">Όλα</button>
          <span class="vline"></span>
          <button class="sheet on" aria-label="Παράθυρο 1"><svg><use href="#sheet"/></svg><b>1</b></button>
          <button class="sheet" aria-label="Παράθυρο 2"><svg><use href="#sheet"/></svg><b>2</b></button>
        </div>
        <div class="tree-box">
          <ul class="tree nav">
            <li><svg class="ex"><use href="#closed"/></svg><svg><use href="#folder-b"/></svg>Βιβλιοθήκες</li>
            <li><svg class="ex"><use href="#open"/></svg><svg><use href="#folder"/></svg>Δεδομένα</li>
            <li class="l1"><svg class="ex"><use href="#closed"/></svg><svg><use href="#folder"/></svg>Κτήριο</li>
            <li class="l1"><svg class="ex"><use href="#closed"/></svg><svg><use href="#folder"/></svg>Φορτίσεις</li>
            <li class="l1"><svg class="ex"><use href="#closed"/></svg><svg><use href="#folder"/></svg>Δεδομένα Ελέγχων</li>
            <li class="l1"><svg class="ex"><use href="#closed"/></svg><svg><use href="#folder"/></svg>Κόμβοι</li>
            <li class="l1"><svg class="ex"><use href="#open"/></svg><svg><use href="#folder"/></svg>Οπλισμένο Σκυρόδεμα</li>
            <li class="l2"><svg class="ex"><use href="#open"/></svg><svg><use href="#folder"/></svg>Δοκοί</li>
            <li class="l3"><span class="ex"></span><svg><use href="#i-section"/></svg>Συνδεσμολογία-Διατομή</li>
            <li class="l3"><span class="ex"></span><svg><use href="#i-supp"/></svg>Συνθήκες Στήριξης</li>
            <li class="l3"><span class="ex"></span><svg><use href="#doc"/></svg>Αδρανειακά Μεγέθη</li>
            <li class="l3 hot"><span class="ex"></span><svg><use href="#i-arms"/></svg>Στερεοί Βραχίονες</li>
            <li class="l3"><span class="ex"></span><svg><use href="#doc"/></svg>Έδαφος</li>
            <li class="l3"><span class="ex"></span><svg><use href="#i-macro"/></svg>Μακροδοκοί</li>
            <li class="l3"><span class="ex"></span><svg><use href="#i-brick"/></svg>Τοιχοπληρώσεις-Φορτία</li>
            <li class="l3"><span class="ex"></span><svg><use href="#i-model"/></svg>Τοιχοπληρώσεις-Μοντέλο</li>
            <li class="l3 last"><span class="ex"></span><svg><use href="#doc"/></svg>Ku-Mu</li>
            <li class="l2"><svg class="ex"><use href="#closed"/></svg><svg><use href="#folder"/></svg>Υποστυλώματα</li>
            <li class="l2"><svg class="ex"><use href="#closed"/></svg><svg><use href="#folder"/></svg>Τοιχώματα</li>
            <li class="l2"><svg class="ex"><use href="#closed"/></svg><svg><use href="#folder"/></svg>Πέδιλα</li>
          </ul>
          <i class="thumb"></i>
        </div>
      </section>
    </aside>

    <!-- DRAWING + WORK WINDOW -->
    <section class="center">
      <div class="scroll-strip">
        <div class="spin">
          <button aria-label="Πάνω"><svg class="flip"><use href="#tri"/></svg></button>
          <button aria-label="Κάτω"><svg><use href="#tri"/></svg></button>
        </div>
      </div>
      <div class="canvas">
        <svg viewBox="381 167 1038 560" role="img" aria-label="Κάτοψη φορέα">
          <!-- light parts of the beams -->
          <g fill="#9bcafe">
            <path d="M580 242h630v20H580zM580 628h630v20H580zM580 262h19v366h-19z"/>
            <path d="M1187 262h18l5 366h-19z"/>
          </g>
          <path d="M589 251h607l5 387H589z" fill="#a4dde9"/>
          <!-- beams over the slab -->
          <g fill="#64b6f3">
            <path d="M589 251h607v11H589zM589 628h612v10H589zM589 262h10v366h-10zM885 262h20v366h-20z"/>
            <path d="M1187 262h9l5 366h-10z"/>
          </g>
          <g fill="none" stroke="#2f90d8">
            <path d="M589.500 251.500H1195.500L1201.500 638.500H589.500zM895.500 251v387"/>
            <path d="M610 628.500h570M885.500 272v345M1187.500 272l4 345M1204.500 272l6 345" stroke-dasharray="3 2" stroke="#58a8ea"/>
            <path d="M580.500 272v345M610 242.500h570" stroke="#6cb4f0"/>
            <path d="M690.500 248.500v7l8-3.500zM991.500 248.500v7l8-3.500zM690.500 634.500v7l8-3.500zM991.500 634.500v7l8-3.500zM585.500 511.500h8l-4-8zM891.500 511.500h8l-4-8zM1195.500 511.500h8l-4-8z" stroke="#4aa0e6"/>
          </g>
          <!-- columns -->
          <g fill="#9bcfa2">
            <path d="M580 242h30v31h-30zM880 242h31v31h-31zM1180 242h31v31h-31zM580 617h30v31h-30zM880 617h31v31h-31zM1180 617h31v31h-31z"/>
          </g>
          <g fill="#5eb384">
            <path d="M589 251h21v22h-21zM880 251h31v22h-31zM1180 251h16v22h-16zM589 617h21v21h-21zM880 617h31v21h-31zM1180 617h21v21h-21z"/>
          </g>
          <path d="M589.500 273v-21.500h21M880 251.500h31M1180 251.500h15.500V273M589.500 617v21.500h21M880 638.500h31M1180 638.500h21.500M895.500 251v22M895.500 617v21" fill="none" stroke="#2c86a8" stroke-dasharray="2 1"/>
          <path d="M587 257.500h17M595.500 249v16M887 257.500h17M895.500 249v16M1187 257.500h17M1195.500 249v16M587 632.500h17M595.500 625v16M887 632.500h17M895.500 625v16M1187 632.500h17M1195.500 625v16" stroke="#333"/>
          <path d="M557 632.500h30M595.500 641v30" stroke="#e02020"/>
          <g class="cad">
            <text x="599" y="251">Κ4</text><text x="900" y="251">Κ5</text><text x="1200" y="251">Κ6</text>
            <text x="599" y="626">Κ1</text><text x="900" y="626">Κ2</text><text x="1200" y="626">Κ3</text>
          </g>
          <!-- slab marks -->
          <g class="cad slab" stroke-width="1">
            <circle cx="742.500" cy="445" r="12.500"/><path d="M723 444.500h39M742.500 425v7M742.500 458v7"/>
            <circle cx="1046.500" cy="445" r="12.500"/><path d="M1027 444.500h39M1046.500 425v7M1046.500 458v7"/>
            <text x="737" y="442">Π1</text><text x="733" y="452">h=15</text><text x="743" y="428">2</text><text x="762" y="447">1</text>
            <text x="1041" y="442">Π2</text><text x="1037" y="452">h=15</text><text x="1047" y="428">2</text><text x="1067" y="447">1</text>
          </g>
          <!-- callout arrow -->
          <path class="callout" d="M1210 537l15-12 2 6 47-16 4 7-50 16 1 4z"/>
          <!-- axes -->
          <path d="M1382.500 202v-29M1379 178l3.500-6 3.500 6" fill="none" stroke="#18c818" stroke-width="1.500"/>
          <path d="M1383 201.500h28M1407 198l5 3.500-5 3.500" fill="none" stroke="#e21414" stroke-width="1.500"/>
          <text x="1385" y="198" font-size="11" font-family="Roboto" fill="#2a40c0">z</text>
          <text x="1412" y="198" font-size="11" font-family="Roboto" fill="#e21414">x</text>
        </svg>
      </div>
      <section class="work">
        <header class="panel-head low">
          <h2>Παράθυρο Εργασίας 1</h2>
          <button aria-label="Μενού"><svg><use href="#tri"/></svg></button>
          <button aria-label="Καρφίτσωμα"><svg><use href="#pin"/></svg></button>
          <button aria-label="Κλείσιμο"><svg><use href="#close"/></svg></button>
        </header>
        <div class="filter">
          <button>Επιλεγμένα</button>
          <button class="on">Όλα</button>
        </div>
        <div class="grid-box">
          <table class="arms">
            <colgroup>
              <col class="c-no"><col class="c-name"><col class="c-name"><col class="c-val"><col class="c-val"><col class="c-val"><col class="c-val"><col class="c-val"><col class="c-y"><col class="c-z"><col class="c-val">
            </colgroup>
            <thead>
              <tr><th rowspan="3">α/α</th><th rowspan="3">Όνομα</th><th rowspan="3">Στάθμη</th><th colspan="8">Στερεοί Βραχίονες</th></tr>
              <tr><th>x</th><th>y</th><th>z δ.2</th><th>z δ.3</th><th>x</th><th>y</th><th>z δ.2</th><th>z δ.3</th></tr>
              <tr><th colspan="4">[mm]</th><th colspan="4">[mm]</th></tr>
            </thead>
            <tbody>
              <tr><th>0</th><td>Δ1</td><td>Σ2</td><td>200</td><td>-75</td><td>0</td><td></td><td>-200</td><td>-75</td><td>0</td><td></td></tr>
              <tr><th>1</th><td>Δ2</td><td>Σ2</td><td>200</td><td>-75</td><td>0</td><td></td><td>-200</td><td>-75</td><td>0</td><td></td></tr>
              <tr><th>2</th><td>Δ3</td><td>Σ2</td><td>200</td><td>75</td><td>0</td><td></td><td>-200</td><td>75</td><td>0</td><td></td></tr>
              <tr><th>3</th><td>Δ4</td><td>Σ2</td><td>200</td><td>75</td><td>0</td><td></td><td>-200</td><td>75</td><td>0</td><td></td></tr>
              <tr><th>4</th><td>Δ5</td><td>Σ2</td><td>-74</td><td>200</td><td>0</td><td></td><td>-74</td><td>-200</td><td>0</td><td></td></tr>
              <tr class="picked"><th>5</th><td>Δ6</td><td>Σ2</td><td>75</td><td>200</td><td>0</td><td></td><td>0</td><td>-200</td><td>0</td><td></td></tr>
              <tr><th>6</th><td>Δ7</td><td>Σ2</td><td>0</td><td>200</td><td>0</td><td></td><td>0</td><td>-200</td><td>0</td><td></td></tr>
            </tbody>
          </table>
        </div>
        <nav class="dock-tabs">
          <a href="#">Αποτελέσματα</a>
          <a href="#" class="active">Παράθυρο Εργασίας 1</a>
          <a href="#"><span class="sheet"><svg><use href="#sheet"/></svg><b>2</b></span>Παράθυρο Εργασίας 2</a>
          <a href="#"><svg><use href="#house"/></svg>Βοήθεια</a>
        </nav>
      </section>
    </section>

    <!-- SELECTED ELEMENTS -->
    <aside class="right">
      <header class="panel-head">
        <h2>Επιλεγμένα Στοιχεία</h2>
        <button class="fold" aria-label="Σύμπτυξη"><svg><use href="#tri"/></svg></button>
      </header>
      <div class="tools sel">
        <button aria-label="Επιλογή"><svg><use href="#pick"/></svg></button>
        <span class="vline"></span>
        <select class="members" aria-label="Στοιχεία"><option>1 Γραμμικά Στοιχεί</option></select>
        <span class="vline"></span>
        <button class="img">img</button>
        <span class="vline"></span>
        <button aria-label="Όλα"><svg><use href="#zoom-all"/></svg></button>
        <button aria-label="Μεγέθυνση παραθύρου"><svg><use href="#zoom-win"/></svg></button>
        <span class="vline"></span>
        <button class="on" aria-label="Κάτοψη"><svg><use href="#cube-top"/></svg></button>
        <button aria-label="Πρόσοψη"><svg><use href="#cube-front-l"/></svg></button>
        <button aria-label="Πλάγια όψη"><svg><use href="#cube-right"/></svg></button>
        <button aria-label="Τρισδιάστατο"><svg><use href="#cube-light"/></svg></button>
        <span class="vline"></span>
        <button aria-label="Αντιγραφή"><svg><use href="#copy"/></svg></button>
      </div>
      <div class="section-view">
        <svg viewBox="1428 209 490 273" role="img" aria-label="Διατομή δοκού">
          <text class="mono" x="1672" y="222" text-anchor="middle">2Φ14+5Φ12+2Φ08</text>
          <path d="M1549.500 237.500h246v64h-69v151h-108v-151h-69z" fill="none" stroke="#eeb54f"/>
          <g fill="none" stroke="#e21414">
            <rect x="1635.500" y="252.500" width="74" height="183" rx="5"/>
            <rect x="1639.500" y="255.500" width="66" height="176"/>
            <path d="M1672.500 248v68.500H1741M1699.500 255.500l-23 23 7 6 25.500-25M1703 256l-24.500 24.500M1705 259l-24 24"/>
          </g>
          <g fill="#333" stroke="#e21414">
            <circle cx="1642" cy="258" r="2.500"/><circle cx="1672.500" cy="258" r="2"/><circle cx="1703" cy="258" r="2.500"/>
            <circle cx="1642" cy="270" r="2.500"/><circle cx="1703" cy="270" r="2.500"/>
            <circle cx="1641" cy="344" r="1.500"/><circle cx="1704" cy="344" r="1.500"/>
            <circle cx="1642.500" cy="428.500" r="2.500"/><circle cx="1702.500" cy="428.500" r="2.500"/>
            <circle cx="1443" cy="345" r="5"/>
          </g>
          <text class="mono axis" transform="translate(1685 253) rotate(-90)">2</text>
          <text class="mono axis" x="1736" y="330">3</text>
          <text class="mono" x="1454" y="350">B500C</text>
          <path d="M1437.500 456.500h25v15h-25z" fill="#0f0" stroke="#222"/>
          <path d="M1462.500 456.500h49v15h-49z" fill="#fff" stroke="#222"/>
          <path d="M1511.500 456.500h24v15h-24z" fill="#0f0" stroke="#d22"/>
          <path d="M1448 461h5v5h-5zM1484 461h5v5h-5zM1521 461h5v5h-5z" fill="#e21414"/>
        </svg>
      </div>
      <div class="props-wrap">
        <div class="props-box">
          <table class="props">
            <colgroup><col class="p-gutter"><col class="p-name"><col></colgroup>
            <tbody>
              <tr><td></td><th>Διάταξη Όπλισης</th><td>E1208</td></tr>
              <tr><td></td><th>Υλικό</th><td>C20/25</td></tr>
              <tr><td></td><th>Στοιχείο Διαζωματικής Τοιχοποιίας</th><td>ΟΧΙ</td></tr>
              <tr><td></td><th><label><input type="checkbox">Ορισμός bm</label></th><td></td></tr>
              <tr class="muted"><td></td><th>Πλάτος bm=</th><td>57.2043 cm</td></tr>
              <tr><td></td><th><label><input type="checkbox">Ορισμός hs</label></th><td></td></tr>
              <tr class="muted"><td></td><th>Πάχος hs=</th><td>15 cm</td></tr>
              <tr class="head sub"><td></td><th colspan="2"><label><svg class="ex"><use href="#closed"/></svg><input type="checkbox">Τροποποίηση Αδρανειακών Μεγεθών</label></th></tr>
              <tr class="head"><td><svg class="ex"><use href="#open"/></svg></td><th colspan="2">Πυκνότητα Συνδετήρων (Lκρ,min = 50.0/50.0 cm)</th></tr>
              <tr><td></td><th>Κρίσιμη Περιοχή</th><td>10.0 cm</td></tr>
              <tr><td></td><th>Μη Κρίσιμη Περιοχή</th><td>20.0 cm</td></tr>
              <tr class="nested"><td></td><th><svg class="ex"><use href="#open"/></svg>Επέκταση Πύκνωσης</th><td>0.0 cm/0.0 cm</td></tr>
              <tr class="nested deep"><td></td><th>Επέκταση Πύκνωσης Αρχής κατά:</th><td>0.0 cm</td></tr>
              <tr class="nested deep"><td></td><th>Επέκταση Πύκνωσης Τέλους κατά:</th><td>0.0 cm</td></tr>
              <tr><td></td><th>Αυτόματος Υπολ. Γωνίας Θλιβ. Διαγ.</th><td>ΝΑΙ</td></tr>
              <tr class="head"><td><svg class="ex"><use href="#open"/></svg></td><th colspan="2">Στερεοί Βραχίονες αρχής σε mm</th></tr>
              <tr><td></td><th>Rαx</th><td>75</td></tr>
              <tr><td></td><th>Rαy</th><td>200</td></tr>
              <tr class="current"><td></td><th>Rαz</th><td>0</td></tr>
              <tr class="head"><td><svg class="ex"><use href="#open"/></svg></td><th colspan="2">Στερεοί Βραχίονες τέλους σε mm</th></tr>
              <tr><td></td><th>Rτx</th><td>0</td></tr>
              <tr><td></td><th>Rτy</th><td>-200</td></tr>
              <tr><td></td><th>Rτz</th><td>0</td></tr>
              <tr class="head"><td><svg class="ex"><use href="#open"/></svg></td><th colspan="2">Εύκαμπτο Μήκος</th></tr>
              <tr class="muted"><td></td><th>L=</th><td>4.60 m</td></tr>
              <tr><td></td><th>Συντελεστής μήκους για ΟΚΛ</th><td>1.00</td></tr>
              <tr class="head"><td><svg class="ex"><use href="#open"/></svg></td><th colspan="2">Συνθήκες Στήριξης Κόμβων περί τη Διεύθυνση 2</th></tr>
              <tr><td></td><th>Αρχής (Κ3-Σ2)</th><td>Πλήρης Πάκτωση</td></tr>
              <tr><td></td><th>Τέλους (Κ6-Σ2)</th><td>Πλήρης Πάκτωση</td></tr>
              <tr class="head"><td><svg class="ex"><use href="#open"/></svg></td><th colspan="2">Συνθήκες Στήριξης Κόμβων περί τη Διεύθυνση 3</th></tr>
            </tbody>
          </table>
          <i class="thumb"></i>
        </div>
        <i class="mark mark-arms"></i>
      </div>
      <div class="hint"><strong>Rαz</strong><span>Rαz</span></div>
      <div class="splitter"></div>
      <div class="side-tabs">
        <button class="on" aria-label="Πληροφορίες"><svg><use href="#b-info"/></svg></button>
        <button aria-label="Στρώσεις"><svg><use href="#b-db"/></svg></button>
        <button aria-label="Νέο κατακόρυφο"><svg><use href="#b-vadd"/></svg></button>
        <button aria-label="Νέος κόμβος"><svg><use href="#b-nadd"/></svg></button>
        <button aria-label="Καμπύλη"><svg><use href="#b-curve"/></svg></button>
        <button aria-label="Διάγραμμα"><svg><use href="#b-chart"/></svg></button>
        <button aria-label="Συντελεστές"><svg><use href="#b-cr"/></svg></button>
        <button aria-label="Έγγραφο"><svg><use href="#b-doc"/></svg></button>
        <button aria-label="Συνδετήρας"><svg><use href="#b-stirrup"/></svg></button>
        <button aria-label="Πίνακας"><svg><use href="#b-box"/></svg></button>
        <button aria-label="Χρώματα"><svg><use href="#b-globe"/></svg></button>
        <button aria-label="Περισσότερα"><svg><use href="#b-more"/></svg></button>
      </div>
    </aside>
  </main>

  <!-- STATUS BAR -->
  <footer class="status">
    <a class="site" href="#">www.tol.com.gr</a>
    <div class="state">
      <button aria-label="Πίνακες"><svg><use href="#s-sheet"/></svg><svg class="chev"><use href="#chev"/></svg></button>
      <button aria-label="Λίστα"><svg><use href="#s-list"/></svg></button>
      <span class="code">ΕΥΡΩΚΩΔΙΚΕΣ | Ιδιομορφική | Κ.Π.Μ. | q=3.00 | Σχεδιασμού | Τύπος 1</span>
    </div>
    <span class="project">Νέο Έργο</span>
    <span class="coords"><svg><use href="#lock"/></svg>x=9.419 y=-1.045 z=6.000 m</span>
    <div class="snaps">
      <button>κάναβος <svg class="chev"><use href="#chev"/></svg></button>
      <button>έλξη</button>
      <button class="snap">dxf</button>
      <button class="snap">έλξη</button>
      <button class="snap last">κάθετα</button>
    </div>
    <div class="zoom">
      <button class="minus" aria-label="Σμίκρυνση">−</button>
      <input type="range" aria-label="Μεγέθυνση" value="50">
      <button aria-label="Μεγέθυνση">+</button>
    </div>
  </footer>
</body>
</html>
```
FILE: styles.css
```
/* GLOBAL */
* { box-sizing:border-box; }
body { margin:0; height:100vh; display:flex; flex-direction:column; overflow:hidden;
  font:12px/16px 'Noto Sans', sans-serif; color:#444; background:#e6e6e6; border-bottom:1px solid #444; }
h2, h3, ul { margin:0; padding:0; font-weight:400; }
ul { list-style:none; }
a { color:inherit; text-decoration:none; }
button { font:inherit; color:inherit; background:none; border:0; padding:0; margin:0; white-space:nowrap; }
svg { width:16px; height:16px; flex:none; }
.sprite { display:none; }
.chev { width:8px; height:8px; }
input[type=checkbox] { appearance:none; width:11px; height:11px; margin:0; flex:none; display:grid; place-items:center; border:1px solid #999; background:#fff; }
input[type=checkbox]:checked::after { content:''; width:7px; height:4px; border:solid #666; border-width:0 0 1px 1px; transform:rotate(-45deg) translate(1px,-1px); }
select { font:inherit; color:#444; appearance:none; border:1px solid #c3c3c3; border-radius:0; padding:0 14px 0 3px;
  background:#fff url("data:image/svg+xml,%3Csvg xmlns='http://www.w3.org/2000/svg' width='5' height='3'%3E%3Cpath d='M0 0h5L2.5 3z' fill='%23666'/%3E%3C/svg%3E") no-repeat right 4px center; }

/* MENU TABS */
.menu { position:relative; flex:none; height:36px; display:flex; align-items:flex-end; background:#2b579a; color:#fff; font-size:11px; }
.swirls { position:absolute; right:40px; top:0; width:400px; height:36px; }
.menu-tabs { display:flex; align-items:flex-end; gap:1px; padding-left:4px; }
.menu-tabs a { height:26px; line-height:26px; padding:0 16px; }
.menu-tabs a.gap-left { margin-left:9px; }
.menu-tabs a.active { background:#f0f0f0; color:#2b579a; }
.menu-tabs a.context { height:36px; padding:10px 20px 0; background:#35468c; }
.ask { display:flex; align-items:center; gap:10px; height:26px; padding-left:20px; }
.ask .bulb { width:12px; height:14px; }
.ask input { width:170px; border:0; padding:0; background:none; font:inherit; }
.ask input::placeholder { color:#b4c4de; }
.version { position:relative; margin-left:auto; height:26px; line-height:26px; padding-right:8px; }
.style-btn { position:relative; height:26px; padding-right:3px; }
.style-btn .chev { margin-left:6px; }

/* RIBBON */
.ribbon { flex:none; height:99px; display:grid; grid-template-columns:137px 440px 102px 478px 164px 169px 132px 168px; background:#f0f0f0; border-bottom:1px solid #d0d0d0; }
.group { margin:3px 0; border-right:1px solid #cfcfcf; display:flex; flex-direction:column; }
.group h3 { font-size:12px; color:#666; text-align:center; white-space:nowrap; }
.group-body { height:74px; display:flex; }
.group-body.spread { justify-content:space-evenly; }
.group-body.lines { padding-left:3px; }
.big { display:flex; flex-direction:column; align-items:center; padding-top:7px; line-height:15px; }
.big svg { width:32px; height:32px; }
.big .chev { width:8px; height:8px; margin-top:2px; }
.big.wide { width:80px; }
.off { color:#aaa; }
.cmds { position:relative; padding:4px 5px 0 8px; }
.cmds.two { padding-top:6px; }
.cmds.tight { padding:4px 1px 0 5px; }
.cmds.marked { padding-right:0; }
.cmds.inset { padding-left:20px; }
.cmds.split::before { content:''; position:absolute; left:0; top:7px; width:1px; height:61px; background:#cfcfcf; }
.cmds button, .cmds label { display:flex; align-items:center; gap:3px; height:22px; white-space:nowrap; }
.cmds.two button { height:30px; }
.cmds label { gap:5px; }

/* RED CALLOUTS */
.mark { position:absolute; border:3px solid #e81010; box-shadow:3px 3px 4px rgba(0,0,0,0.45), inset 3px 3px 4px rgba(0,0,0,0.4); pointer-events:none; }
.mark-repos { left:-1px; right:-6px; top:-3px; height:31px; }
.mark-axial { left:-1px; right:-6px; top:25px; height:26px; }
.mark-arms { left:-5px; width:356px; top:250px; height:150px; border-width:5px; }

/* WORKSPACE */
.workspace { flex:1; min-height:0; display:grid; grid-template-columns:375px minmax(0,1fr) 495px; column-gap:5px; }
.left { display:grid; grid-template-rows:558fr 409fr; min-height:0; }
.panel { display:flex; flex-direction:column; min-height:0; background:#efefef; }
.panel-head { flex:none; display:flex; align-items:center; height:40px; padding:0 1px 0 5px; background:#e6e6e6; }
.panel-head.low { height:45px; padding-top:6px; }
.panel-head h2 { flex:1; font-size:20px; line-height:28px; }
.panel-head button { width:19px; height:16px; display:grid; place-items:center; }
.panel-head svg { width:10px; height:10px; }
.tools { flex:none; display:flex; align-items:center; gap:2px; height:25px; padding-left:10px; }
.tools button { width:20px; height:20px; display:grid; place-items:center; }
.tools .gap-l { margin-left:10px; }
.tools .drop { width:20px; margin-right:1px; }
.tools .drop svg { width:5px; height:5px; }
.tools .level { width:66px; height:21px; margin-right:2px; }
.on { background:#cfcfcf; }
.tools.picks { height:27px; border-bottom:1px solid #d0d0d0; }
.vline { flex:none; width:1px; height:20px; background:#d0d0d0; }

/* TREES */
.tree-box { position:relative; flex:1; min-height:0; overflow:hidden; background:#fff; border:1px solid #cfcfcf; }
.tree-box.tall { margin-top:2px; }
.thumb { position:absolute; right:2px; top:18px; bottom:178px; width:2px; background:#a5a5a5; }
.tall .thumb { bottom:119px; }
.tree { font:11px/17px Roboto, sans-serif; padding-top:1px; }
.tree li { display:flex; align-items:center; height:17px; padding-left:2px; white-space:nowrap; }
.tree li.dark { color:#000; }
.tree li > svg:not(.ex) { margin:0 3px 0 5px; }
.tree label { display:flex; align-items:center; }
.tree label input { margin:0 6px 0 5px; }
.tree label svg { margin-right:3px; }
.ex { width:14px; height:14px; flex:none; }
.tree .l1 { padding-left:19px; background:linear-gradient(#ccc,#ccc) 26px 0/1px 100% no-repeat, linear-gradient(#ccc,#ccc) 26px 8px/9px 1px no-repeat; }
.tree .l1.last { background-size:1px 9px, 9px 1px; }
.tree .l2 { padding-left:36px; background:linear-gradient(#ccc,#ccc) 26px 0/1px 100% no-repeat, linear-gradient(#ccc,#ccc) 43px 0/1px 100% no-repeat, linear-gradient(#ccc,#ccc) 43px 8px/9px 1px no-repeat; }
.tree .l3 { padding-left:53px; background:linear-gradient(#ccc,#ccc) 26px 0/1px 100% no-repeat, linear-gradient(#ccc,#ccc) 43px 0/1px 100% no-repeat, linear-gradient(#ccc,#ccc) 60px 0/1px 100% no-repeat, linear-gradient(#ccc,#ccc) 60px 8px/9px 1px no-repeat; }
.tree .l3.last { background-size:1px 100%, 1px 100%, 1px 9px, 9px 1px; }
.tree .hot { background:linear-gradient(#efefef,#efefef) 35px 0/319px 100% no-repeat; }
.tree .l3.hot { background:linear-gradient(#ccc,#ccc) 26px 0/1px 100% no-repeat, linear-gradient(#ccc,#ccc) 43px 0/1px 100% no-repeat, linear-gradient(#ccc,#ccc) 60px 0/1px 100% no-repeat, linear-gradient(#ccc,#ccc) 60px 8px/9px 1px no-repeat, linear-gradient(#efefef,#efefef) 69px 0/285px 100% no-repeat; }

/* DOCK TABS */
.dock-tabs { flex:none; display:flex; height:24px; background:#e6e6e6; border-bottom:1px solid #c3c3c3; }
.dock-tabs a { display:flex; align-items:center; gap:2px; height:22px; padding:0 5px; white-space:nowrap; }
.dock-tabs a.active { background:#fff; border:solid #a8a8a8; border-width:0 1px 1px; padding:0 4px; }
.left .dock-tabs a { gap:1px; padding:0 4px 0 3px; }
.filter { flex:none; display:flex; align-items:center; gap:4px; height:24px; padding:0 0 1px 9px; background:#efefef; font-size:11px; }
.filter button { height:19px; padding:0 4px; }
.filter .sheet { padding:0 2px; width:20px; }
.sheet { position:relative; display:inline-flex; align-items:center; }
.sheet b { position:absolute; right:0; bottom:0; font:bold 10px/9px Roboto, sans-serif; color:#c8102e; }

/* CENTER */
.center { display:grid; grid-template-rows:31px 560fr 376fr; min-height:0; border-right:1px solid #bbb; }
.scroll-strip { display:flex; justify-content:flex-end; }
.spin { display:flex; flex-direction:column; justify-content:space-evenly; width:16px; background:#efefef; }
.spin button { height:10px; display:grid; place-items:center; }
.spin svg { width:8px; height:8px; opacity:.6; }
.flip { transform:rotate(180deg); }
.canvas { min-height:0; background:#fff; border:1px solid #777; border-width:1px 0 0 1px; }
.canvas svg { display:block; width:100%; height:100%; }
.cad { font:8px Roboto, sans-serif; fill:#333; }
.cad.slab { fill:#2f90d8; }
.slab circle, .slab path { fill:none; stroke:#2f90d8; }
.callout { fill:#e81414; filter:drop-shadow(2px 4px 2px rgba(0,0,0,0.5)); }
.work { display:flex; flex-direction:column; min-height:0; border-top:1px solid #c3c3c3; }
.grid-box { flex:1; min-height:0; background:#efefef; border:1px solid #666; }

/* RIGID ARMS TABLE */
.arms { table-layout:fixed; width:722px; border-collapse:collapse; font-size:11px; color:#111; }
.c-no { width:35px; }
.c-name { width:50px; }
.c-val { width:65px; }
.c-y { width:92px; }
.c-z { width:104px; }
.arms th { height:22px; padding:0; font-weight:400; background:#efefef; border:1px solid #222; }
.arms thead tr:first-child th { border-top:0; }
.arms tr th:first-child { border-left:0; }
.arms td { height:20px; padding:0 17px 0 2px; text-align:right; background:#fff; border:1px solid #777; }
.arms tbody th { height:20px; text-align:right; padding-right:2px; }
.arms td:nth-child(2), .arms td:nth-child(3) { text-align:left; padding-right:0; }
.arms td:nth-child(3) { color:#777; }
.arms .picked td { background:#ffe8a4; }
.work .dock-tabs { border-top:1px solid #c3c3c3; height:25px; }

/* RIGHT PANEL */
.right { display:flex; flex-direction:column; min-height:0; padding:0 2px; }
.right .panel-head { height:44px; padding-top:3px; }
.fold { align-self:flex-start; transform:rotate(90deg); }
.fold svg { width:7px; height:7px; }
.tools.sel { height:26px; background:#efefef; }
.sel .vline { margin:0 3px; }
.sel .members { width:116px; height:21px; font:11px Roboto, sans-serif; }
.sel .img { color:#111; font-size:11px; }
.section-view { flex:none; background:#fff; border:1px solid #666; margin-top:3px; }
.section-view svg { display:block; width:100%; height:auto; }
.mono { font:14px 'Liberation Mono', monospace; fill:#111; }
.mono.axis { fill:#d22; }
.props-wrap { position:relative; flex:1; min-height:0; margin-top:3px; }
.props-box { position:relative; height:100%; overflow:hidden; background:#fff; }
.props-box .thumb { right:1px; top:98px; bottom:152px; }
.props { table-layout:fixed; width:calc(100% - 17px); border-collapse:collapse; font:11px/16px Roboto, sans-serif; }
.p-gutter { width:17px; }
.p-name { width:228px; }
.props td, .props th { height:17px; padding:0 4px; text-align:left; font-weight:400; white-space:nowrap; border-bottom:1px solid #ececec; }
.props th { border-right:1px solid #ececec; }
.props td:first-child { padding:0 2px; background:#eee; border:0; }
.props .ex { display:block; }
.props label { display:flex; align-items:center; gap:6px; }
.props label input { width:13px; height:13px; margin-left:-2px; }
.props .head th { font-weight:700; font-size:12px; background:#eee; border:0; }
.props .head label input { width:11px; height:11px; margin:0; }
.props .sub label { gap:4px; }
.props .sub .ex { margin:0; }
.props .current th { background:#eee; }
.props .muted { color:#aaa; }
.props .nested th { padding-left:20px; background:linear-gradient(#eee,#eee) 0 0/17px 100% no-repeat; }
.props .nested .ex { float:left; margin-left:-18px; }
.props .nested.deep th { padding-left:37px; }
.hint { flex:none; height:68px; margin-top:4px; padding:3px 4px; display:flex; flex-direction:column; font:11px/15px Roboto, sans-serif; background:#efefef; border-top:1px solid #bbb; }
.hint strong { font-size:12px; }
.splitter { flex:none; height:8px; margin-top:3px; background:repeating-linear-gradient(90deg,#999 0 3px,#fff 3px 6px) center/58px 3px no-repeat #cfcfcf; }
.side-tabs { flex:none; height:32px; display:flex; justify-content:flex-end; gap:2px; padding:1px 0 2px; background:#efefef; }
.side-tabs button { width:24px; display:grid; place-items:center; }

/* STATUS BAR */
.status { flex:none; height:24px; display:grid; grid-template-columns:448px 527px 1fr 201px 207px 134px; align-items:center; padding-bottom:1px; background:#efefef; border-top:1px solid #cfcfcf; }
.site { padding-left:9px; font-size:11px; }
.state { display:flex; align-items:center; gap:10px; padding-left:8px; }
.state button { display:flex; align-items:center; gap:3px; }
.code, .project, .coords, .zoom { font-size:11px; white-space:nowrap; }
.coords { display:flex; align-items:center; gap:10px; }
.snaps { display:flex; align-items:center; font-size:11px; }
.snaps button { padding-right:8px; }
.snaps .chev { margin-left:4px; }
.snaps .snap { height:20px; padding:0 3px; border:1px solid #2b579a; background:#cfcfcf; }
.snaps .snap.last { margin-left:3px; }
.zoom { display:flex; align-items:center; gap:9px; padding-left:4px; }
.zoom button { font-size:16px; line-height:16px; color:#999; }
.zoom input { appearance:none; width:87px; height:14px; margin:0; background:linear-gradient(#999,#999) center/100% 1px no-repeat; }
.zoom input::-webkit-slider-thumb { appearance:none; width:5px; height:14px; border:1px solid #999; background:#efefef; }
```
